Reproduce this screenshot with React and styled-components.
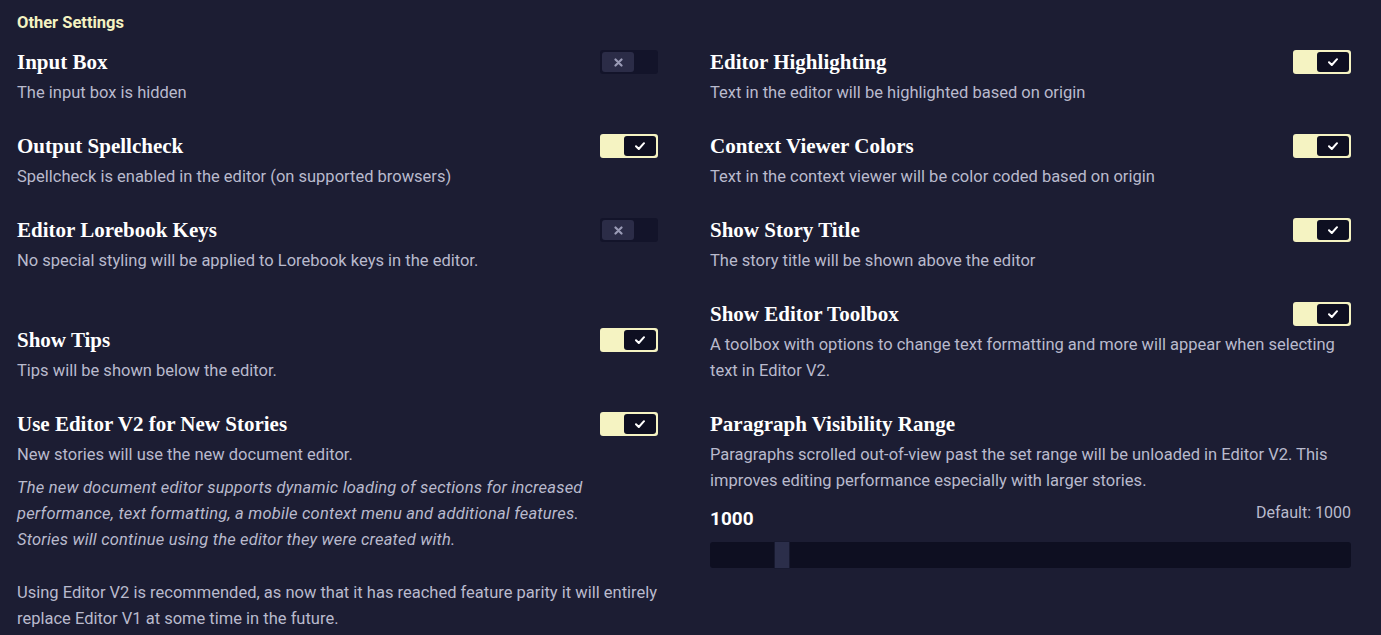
import React from "react";
import styled, { createGlobalStyle } from "styled-components";

const GlobalStyle = createGlobalStyle`
  html, body {
    margin: 0;
    background: #1c1d33;
  }
  * {
    box-sizing: border-box;
  }
`;

const Page = styled.div`
  padding: 13px 30px 0 17px;
  height: 635px;
  overflow: hidden;
  background: #1c1d33;
  font-family: Roboto, "Liberation Sans", sans-serif;
  color: #b9bacd;
`;

const SectionTitle = styled.div`
  font-size: 16.5px;
  line-height: 20px;
  font-weight: 700;
  color: #f5f3c2;
  margin-bottom: 14px;
`;

const Columns = styled.div`
  display: grid;
  grid-template-columns: 1fr 1fr;
  column-gap: 52px;
  align-items: start;
`;

const Column = styled.div`
  display: flex;
  flex-direction: column;
  gap: 25px;
`;

const Setting = styled.div`
  display: flex;
  flex-direction: column;
  padding-bottom: ${(props) => (props.$spacer ? "26px" : "0")};
`;

const TitleRow = styled.div`
  display: flex;
  justify-content: space-between;
  align-items: center;
  margin-bottom: 3px;
`;

const Title = styled.div`
  font-family: "Liberation Serif", "DejaVu Serif", serif;
  font-weight: 700;
  font-size: 21px;
  line-height: 30px;
  color: #ffffff;
`;

const Desc = styled.div`
  font-size: 16.5px;
  line-height: 26px;
  color: #b9bacd;
  margin-top: ${(props) => props.$gap || 0}px;
`;

const Note = styled(Desc)`
  font-style: italic;
  letter-spacing: 0.2px;
  max-width: 570px;
`;

const Track = styled.div`
  width: 58px;
  height: 24px;
  border-radius: 3px;
  padding: 2px;
  display: flex;
  justify-content: ${(props) => (props.$on ? "flex-end" : "flex-start")};
  background: ${(props) => (props.$on ? "#f5f3c2" : "#13142a")};
  flex-shrink: 0;
`;

const Knob = styled.div`
  width: 32px;
  height: 20px;
  border-radius: 3px;
  display: flex;
  align-items: center;
  justify-content: center;
  background: ${(props) => (props.$on ? "#0e0f21" : "#2b2c47")};
`;

const ValueRow = styled.div`
  display: flex;
  justify-content: space-between;
  margin-top: 11px;
`;

const Value = styled.div`
  font-size: 19px;
  line-height: 28px;
  font-weight: 700;
  color: #ffffff;
`;

const DefaultLabel = styled.div`
  font-size: 16px;
  line-height: 16px;
  color: #b9bacd;
`;

const Slider = styled.div`
  position: relative;
  margin-top: 9px;
  height: 26px;
  border-radius: 3px;
  background: #0e0f21;
`;

const Thumb = styled.div`
  position: absolute;
  top: -1px;
  width: 16px;
  height: 28px;
  background: #2b2e4a;
  border: 1px solid #181a30;
`;

function Toggle({ on }) {
  return (
    <Track $on={on}>
      <Knob $on={on}>
        {on ? (
          <svg width="10" height="8" viewBox="0 0 10 8">
            <path d="M1 4.2 L3.8 7 L9 1.2" fill="none" stroke="#ffffff" strokeWidth="2" strokeLinecap="round" strokeLinejoin="round" />
          </svg>
        ) : (
          <svg width="9" height="9" viewBox="0 0 9 9">
            <path d="M1.5 1.5 L7.5 7.5 M7.5 1.5 L1.5 7.5" stroke="#9a9bb6" strokeWidth="2.2" strokeLinecap="round" />
          </svg>
        )}
      </Knob>
    </Track>
  );
}

function Item({ title, on, spacer, children }) {
  return (
    <Setting $spacer={spacer}>
      <TitleRow>
        <Title>{title}</Title>
        {on !== undefined && <Toggle on={on} />}
      </TitleRow>
      {children}
    </Setting>
  );
}

export default function App() {
  const sliderPos = 0.1;
  return (
    <>
      <GlobalStyle />
      <Page>
        <SectionTitle>Other Settings</SectionTitle>
        <Columns>
          <Column>
            <Item title="Input Box" on={false}>
              <Desc>The input box is hidden</Desc>
            </Item>
            <Item title="Output Spellcheck" on>
              <Desc>Spellcheck is enabled in the editor (on supported browsers)</Desc>
            </Item>
            <Item title="Editor Lorebook Keys" on={false} spacer>
              <Desc>No special styling will be applied to Lorebook keys in the editor.</Desc>
            </Item>
            <Item title="Show Tips" on>
              <Desc>Tips will be shown below the editor.</Desc>
            </Item>
            <Item title="Use Editor V2 for New Stories" on>
              <Desc>New stories will use the new document editor.</Desc>
              <Note $gap={7}>
                The new document editor supports dynamic loading of sections for increased
                performance, text formatting, a mobile context menu and additional features.
                Stories will continue using the editor they were created with.
              </Note>
              <Desc $gap={27}>
                Using Editor V2 is recommended, as now that it has reached feature parity it
                will entirely replace Editor V1 at some time in the future.
              </Desc>
            </Item>
          </Column>
          <Column>
            <Item title="Editor Highlighting" on>
              <Desc>Text in the editor will be highlighted based on origin</Desc>
            </Item>
            <Item title="Context Viewer Colors" on>
              <Desc>Text in the context viewer will be color coded based on origin</Desc>
            </Item>
            <Item title="Show Story Title" on>
              <Desc>The story title will be shown above the editor</Desc>
            </Item>
            <Item title="Show Editor Toolbox" on>
              <Desc>
                A toolbox with options to change text formatting and more will appear when
                selecting text in Editor V2.
              </Desc>
            </Item>
            <Item title="Paragraph Visibility Range">
              <Desc>
                Paragraphs scrolled out-of-view past the set range will be unloaded in Editor
                V2. This improves editing performance especially with larger stories.
              </Desc>
              <ValueRow>
                <Value>1000</Value>
                <DefaultLabel>Default: 1000</DefaultLabel>
              </ValueRow>
              <Slider>
                <Thumb style={{ left: `${sliderPos * 100}%` }} />
              </Slider>
            </Item>
          </Column>
        </Columns>
      </Page>
    </>
  );
}
